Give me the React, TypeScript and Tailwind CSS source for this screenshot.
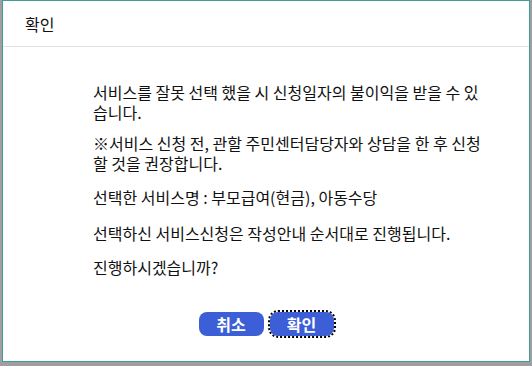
import React from 'react';

const font = { fontFamily: '"Noto Sans CJK KR", "Noto Sans", sans-serif' };

const ConfirmDialog = () => {
    return (
        <div className="ml-[2px] w-[528px] h-[362px] bg-white border border-[#3d9c9c] flex flex-col text-[#111]">
            <div className="h-[46px] shrink-0 border-b border-[#e1e1e1] pl-[22px] flex items-center text-[16px]">
                확인
            </div>
            <div className="pl-[90px] pt-[35px] text-[16px] leading-[20px]">
                <div className="w-[400px]">
                    <p>서비스를 잘못 선택 했을 시 신청일자의 불이익을 받을 수 있습니다.</p>
                    <p className="mt-[11px]">
                        ※서비스 신청 전, 관할 주민센터담당자와 상담을 한 후 신청할 것을 권장합니다.
                    </p>
                    <p className="mt-[14px]">선택한 서비스명 : 부모급여(현금), 아동수당</p>
                    <p className="mt-[16px]">선택하신 서비스신청은 작성안내 순서대로 진행됩니다.</p>
                    <p className="mt-[14px]">진행하시겠습니까?</p>
                </div>
            </div>
            <div className="flex justify-center gap-[6px] mt-[35px]">
                <button
                    type="button"
                    className="w-[65px] h-[24px] rounded-[8px] bg-[#3c5fd7] text-white font-bold text-[16px] leading-none"
                >
                    취소
                </button>
                <button
                    type="button"
                    className="w-[64px] h-[24px] rounded-[8px] bg-[#3c5fd7] text-white font-bold text-[16px] leading-none outline-2 outline-dotted outline-black outline-offset-0"
                >
                    확인
                </button>
            </div>
        </div>
    );
};

export default function App() {
    return (
        <div className="w-[532px] h-[366px] bg-[#9f9f9f] overflow-hidden" style={font}>
            <ConfirmDialog />
        </div>
    );
}
